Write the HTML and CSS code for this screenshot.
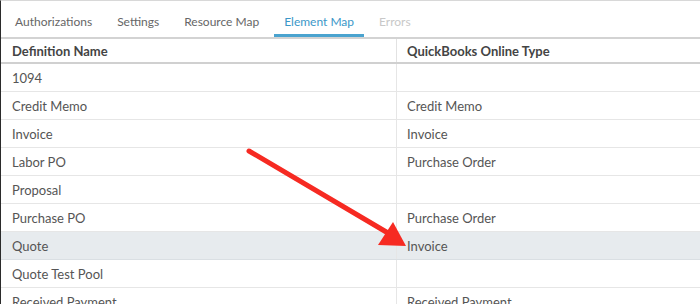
FILE: index.html
```html
<!DOCTYPE html>
<html lang="en">
<head>
  <meta charset="UTF-8" />
  <title>Element Map</title>
  <link rel="stylesheet" href="styles.css">
</head>
<body>
  <div class="panel">
    <nav class="tabs">
      <a class="tab">Authorizations</a>
      <a class="tab">Settings</a>
      <a class="tab">Resource Map</a>
      <a class="tab active">Element Map</a>
      <a class="tab disabled">Errors</a>
    </nav>

    <table class="map-table">
      <thead>
        <tr>
          <th class="col-name">Definition Name</th>
          <th>QuickBooks Online Type</th>
        </tr>
      </thead>
      <tbody>
        <tr><td>1094</td><td></td></tr>
        <tr><td>Credit Memo</td><td>Credit Memo</td></tr>
        <tr><td>Invoice</td><td>Invoice</td></tr>
        <tr><td>Labor PO</td><td>Purchase Order</td></tr>
        <tr><td>Proposal</td><td></td></tr>
        <tr><td>Purchase PO</td><td>Purchase Order</td></tr>
        <tr class="selected"><td>Quote</td><td>Invoice</td></tr>
        <tr><td>Quote Test Pool</td><td></td></tr>
        <tr><td>Received Payment</td><td>Received Payment</td></tr>
      </tbody>
    </table>

    <svg class="arrow" width="700" height="304" viewBox="0 0 700 304">
      <line x1="249" y1="151" x2="388" y2="233" stroke="#f62a22" stroke-width="5" stroke-linecap="round" />
      <polygon points="406,246 378,245 393,222" fill="#f62a22" />
    </svg>
  </div>
</body>
</html>
```

FILE: styles.css
```css
body {
  margin: 0;
  font-family: Lato, "Open Sans", sans-serif;
  font-size: 13px;
  color: #555;
  background: white;
  overflow: hidden;
}

.panel {
  position: relative;
  border-top: 1px solid #d8d8d8;
  border-left: 1px solid #2b2b2b;
  height: 303px;
}

.tabs {
  display: flex;
  gap: 5px;
  padding-left: 4px;
  border-bottom: 2px solid #d3d3d3;
}

.tab {
  display: block;
  padding: 13px 10px 0;
  height: 20px;
  font-size: 12px;
  border-bottom: 3px solid transparent;
  color: #666;
}

.tab.active {
  color: #3b97c8;
  border-bottom-color: #4aa3cf;
}

.tab.disabled {
  color: #c8c8c8;
}

.map-table {
  width: 100%;
  border-collapse: collapse;
}

.map-table th {
  text-align: left;
  font-weight: bold;
  color: #444;
  height: 23px;
  padding: 0 10px;
  border-bottom: 2px solid #d0d0d0;
  border-left: 1px solid #e2e2e2;
}

.map-table th.col-name {
  width: 374px;
  padding-left: 11px;
  border-left: none;
}

.map-table td {
  height: 27px;
  padding: 0 10px;
  border-bottom: 1px solid #e6e6e6;
  border-left: 1px solid #e6e6e6;
}

.map-table td:first-child {
  padding-left: 11px;
  border-left: none;
}

.map-table tr.selected td {
  background: #e7ebee;
  border-bottom-color: #dadfe3;
}

.arrow {
  position: absolute;
  top: -1px;
  left: -1px;
  pointer-events: none;
}
```
